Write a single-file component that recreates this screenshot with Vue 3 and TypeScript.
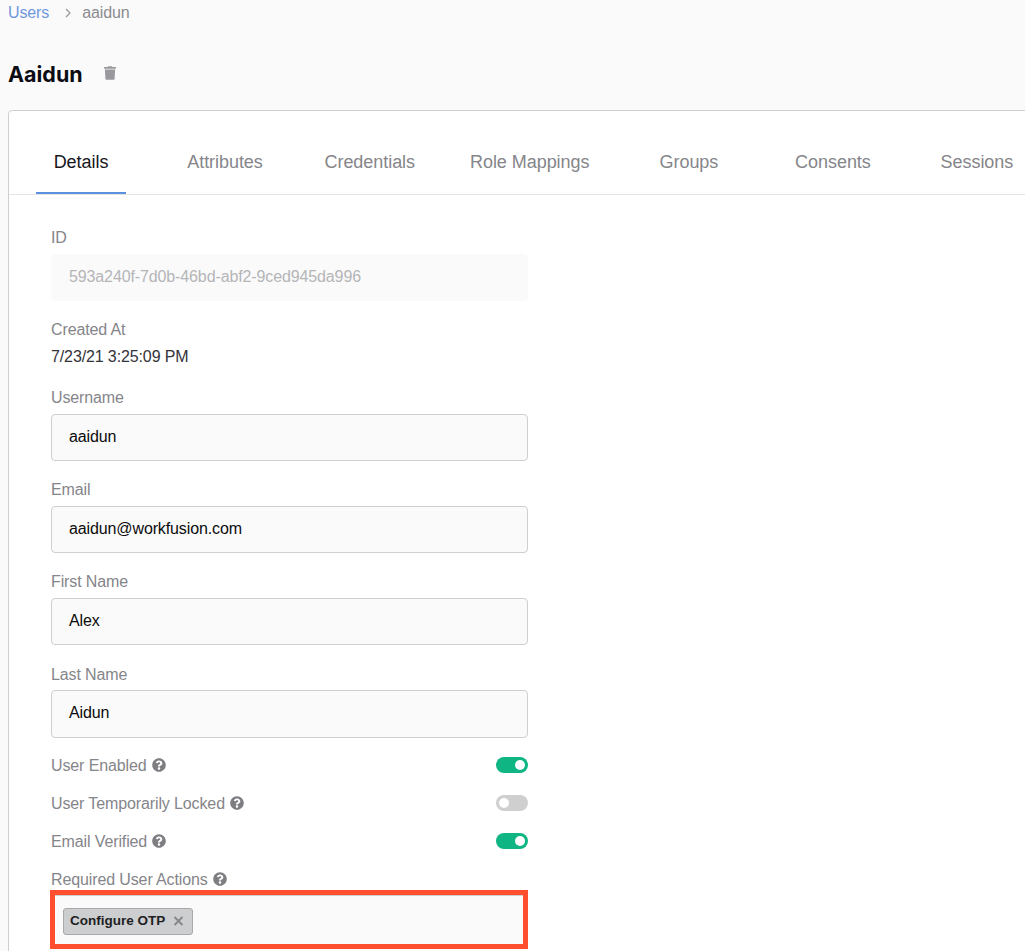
<template>
  <div class="page">
    <nav class="crumbs">
      <a class="crumb-link">Users</a>
      <svg class="crumb-sep" viewBox="0 0 8 12" fill="none" stroke="currentColor" stroke-width="1.3">
        <path d="M2 2l4 4-4 4"></path>
      </svg>
      <span class="crumb-current">aaidun</span>
    </nav>

    <div class="heading">
      <h1 class="title">Aaidun</h1>
      <svg class="trash" viewBox="0 0 448 512" fill="currentColor">
        <path d="M432 32H312l-9.4-18.7A24 24 0 0 0 281.1 0H166.8a23.72 23.72 0 0 0-21.4 13.3L136 32H16A16 16 0 0 0 0 48v32a16 16 0 0 0 16 16h416a16 16 0 0 0 16-16V48a16 16 0 0 0-16-16zM53.2 467a48 48 0 0 0 47.9 45h245.8a48 48 0 0 0 47.9-45L416 128H32z"></path>
      </svg>
    </div>

    <section class="card">
      <div class="tabs">
        <div v-for="tab in tabs" :key="tab" class="tab" :class="{ active: tab === 'Details' }">
          <span class="tab-label">{{ tab }}</span>
        </div>
      </div>

      <form class="form">
        <div class="field">
          <label class="label">ID</label>
          <div class="input disabled">593a240f-7d0b-46bd-abf2-9ced945da996</div>
        </div>

        <div class="field field-static">
          <label class="label">Created At</label>
          <div class="value">7/23/21 3:25:09 PM</div>
        </div>

        <div v-for="item in inputs" :key="item.label" class="field" :class="{ 'field-tall': item.tall }">
          <label class="label">{{ item.label }}</label>
          <div class="input">{{ item.value }}</div>
        </div>

        <div class="switches">
          <div v-for="item in switches" :key="item.label" class="switch-row">
            <span class="label">{{ item.label }}</span>
            <svg class="help" viewBox="0 0 512 512" fill="currentColor">
              <path :d="helpPath"></path>
            </svg>
            <span class="switch" :class="{ on: item.on }"><i class="knob"></i></span>
          </div>
        </div>

        <div class="actions-label">
          <span class="label">Required User Actions</span>
          <svg class="help" viewBox="0 0 512 512" fill="currentColor">
            <path :d="helpPath"></path>
          </svg>
        </div>
        <div class="actions-box">
          <span class="chip">
            Configure OTP
            <svg class="chip-x" viewBox="0 0 10 10" stroke="currentColor" stroke-width="1.8">
              <path d="M1 1l8 8M9 1l-8 8"></path>
            </svg>
          </span>
        </div>
      </form>
    </section>
  </div>
</template>

<script setup lang="ts">
const tabs = ['Details', 'Attributes', 'Credentials', 'Role Mappings', 'Groups', 'Consents', 'Sessions']

const inputs = [
  { label: 'Username', value: 'aaidun' },
  { label: 'Email', value: 'aaidun@workfusion.com' },
  { label: 'First Name', value: 'Alex' },
  { label: 'Last Name', value: 'Aidun', tall: true }
]

const switches = [
  { label: 'User Enabled', on: true },
  { label: 'User Temporarily Locked', on: false },
  { label: 'Email Verified', on: true }
]

const helpPath =
  'M504 256c0 136.997-111.043 248-248 248S8 392.997 8 256C8 119.083 119.043 8 256 8s248 111.083 248 248zM262.655 90c-54.497 0-89.255 22.957-116.549 63.758-3.536 5.286-2.353 12.415 2.715 16.258l34.699 26.31c5.205 3.947 12.621 3.008 16.665-2.122 17.864-22.658 30.113-35.797 57.303-35.797 20.429 0 45.698 13.148 45.698 32.958 0 14.976-12.363 22.667-32.534 33.976C247.128 238.528 216 254.941 216 296v4c0 6.627 5.373 12 12 12h56c6.627 0 12-5.373 12-12v-1.333c0-28.462 83.186-29.647 83.186-106.667 0-58.002-60.165-102-116.531-102zM256 338c-25.365 0-46 20.635-46 46 0 25.364 20.635 46 46 46s46-20.636 46-46c0-25.365-20.635-46-46-46z'
</script>

<style>
html,
body {
  margin: 0;
  overflow: hidden;
  background: #fafafa;
}
</style>

<style scoped>
.page {
  width: 1025px;
  height: 951px;
  overflow: hidden;
  background: #fafafa;
  font-family: "Liberation Sans", Arial, sans-serif;
  font-size: 16px;
  line-height: 22px;
  letter-spacing: -0.12px;
  color: #1f1f24;
}

.crumbs {
  display: flex;
  align-items: center;
  height: 20px;
  padding: 3px 0 0 8px;
}

.crumb-link {
  color: #6f97e0;
}

.crumb-sep {
  width: 8px;
  height: 12px;
  margin: 0 10px 0 15px;
  color: #9a9a9f;
}

.crumb-current {
  color: #8b8b90;
}

.heading {
  display: flex;
  align-items: center;
  height: 24px;
  margin: 39px 0 0 8px;
}

.title {
  margin: 0;
  font-family: "Inter", "Liberation Sans", sans-serif;
  font-size: 21.5px;
  font-weight: 700;
  line-height: 24px;
  letter-spacing: 0;
  color: #0c0c14;
}

.trash {
  width: 12px;
  height: 14px;
  margin: -2px 0 0 21px;
  color: #98989d;
}

.card {
  width: 1100px;
  margin: 24px 0 0 8px;
  background: #fff;
  border: 1px solid #cfcfcf;
  border-radius: 4px;
  box-sizing: border-box;
  padding-bottom: 40px;
}

.tabs {
  display: flex;
  height: 83px;
  border-bottom: 1px solid #e4e4e4;
}

.tab {
  flex: none;
  display: flex;
  justify-content: center;
  box-sizing: border-box;
  min-width: 144px;
  padding: 0 9.5px;
  font-size: 18px;
  letter-spacing: -0.05px;
  color: #85858a;
}

.tab-label {
  display: block;
  height: 83px;
  padding: 41px 18px 0;
  box-sizing: border-box;
  line-height: 20px;
}

.tab.active {
  color: #16161c;
}

.tab.active .tab-label {
  border-bottom: 2px solid #5b8fe0;
}

.form {
  width: 477px;
  margin-left: 42px;
  padding-top: 32px;
}

.field {
  margin-bottom: 18px;
}

.field-static {
  margin-bottom: 21px;
}

.label {
  display: block;
  height: 20px;
  color: #85858a;
}

.field .label {
  margin-bottom: 7px;
}

.field-tall {
  margin-bottom: 17px;
}

.field-tall .label {
  line-height: 24px;
}

.input {
  height: 47px;
  box-sizing: border-box;
  padding: 0 17px;
  background: #fafafa;
  border: 1px solid #cfcfcf;
  border-radius: 4px;
  line-height: 43px;
  color: #0b0b0b;
}

.field-tall .input {
  height: 48px;
}

.input.disabled {
  border-color: #fafafa;
  color: #b5b5b8;
}

.value {
  height: 20px;
  color: #33333a;
}

.switches {
  display: flex;
  flex-direction: column;
  gap: 18px;
}

.switch-row,
.actions-label {
  display: flex;
  align-items: center;
  height: 20px;
}

.help {
  width: 14px;
  height: 14px;
  margin-left: 5px;
  color: #7d7d82;
}

.switch {
  display: flex;
  align-items: center;
  width: 32px;
  height: 16px;
  margin-left: auto;
  padding: 0 3px;
  box-sizing: border-box;
  background: #cfcfcf;
  border-radius: 8px;
}

.switch.on {
  justify-content: flex-end;
  background: #10b584;
}

.knob {
  width: 10px;
  height: 10px;
  background: #fff;
  border-radius: 50%;
}

.actions-label {
  margin-top: 18px;
}

.actions-box {
  display: flex;
  align-items: flex-start;
  height: 59px;
  margin: 1px 0 0 -1px;
  padding: 13px 0 0 8px;
  box-sizing: border-box;
  width: 478px;
  background: #fafafa;
  border: 5px solid #ff4f2e;
  box-shadow: inset 0 1px 0 #cfcfcf;
}

.chip {
  display: flex;
  align-items: center;
  height: 27px;
  box-sizing: border-box;
  padding: 0 8px 2px 6px;
  background: #cdcecf;
  border: 1px solid #a9a9ac;
  border-radius: 3px;
  font-size: 13.5px;
  font-weight: 700;
  letter-spacing: 0;
  color: #1f1f24;
}

.chip-x {
  width: 11px;
  height: 10px;
  margin: 1px 0 0 8px;
  color: #85858a;
}
</style>
